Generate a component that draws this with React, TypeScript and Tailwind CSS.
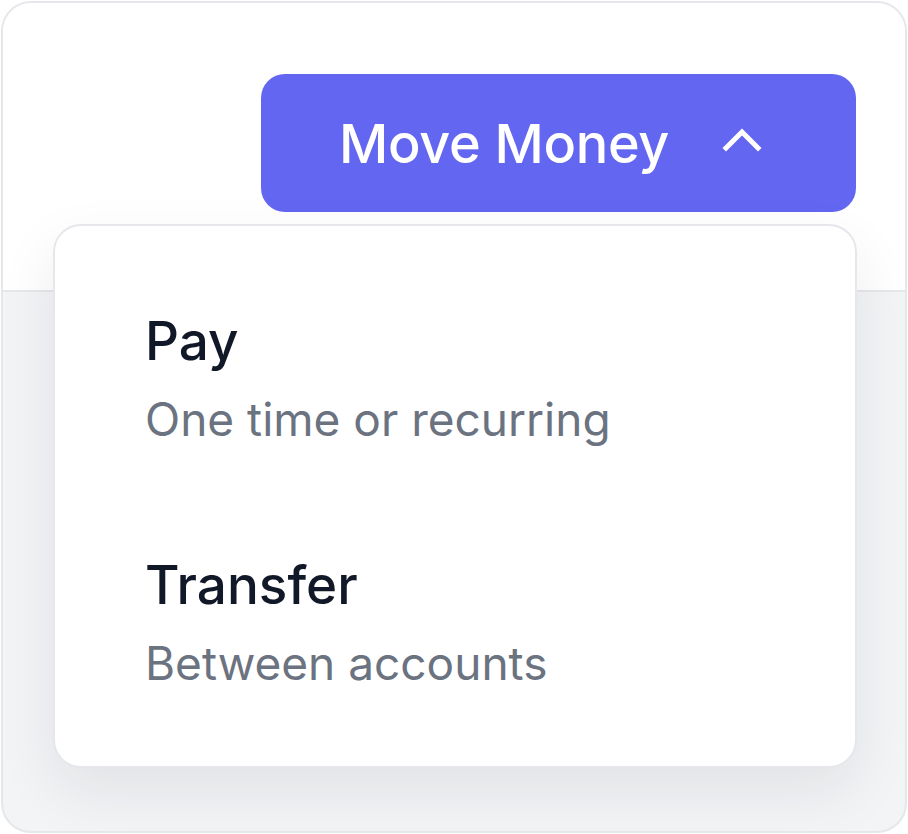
const font = { fontFamily: "Inter, 'Noto Sans', sans-serif" };

function ChevronUp() {
  return (
    <svg width="44" height="28" viewBox="0 0 44 28" fill="none" className="text-white">
      <polyline
        points="6,22 22,6 38,22"
        stroke="currentColor"
        strokeWidth="5"
        strokeLinecap="square"
        strokeLinejoin="miter"
      />
    </svg>
  );
}

const items = [
  { title: "Pay", subtitle: "One time or recurring" },
  { title: "Transfer", subtitle: "Between accounts" },
];

export default function App() {
  return (
    <div className="w-[908px] h-[834px] p-[1px] bg-white" style={font}>
      <div className="w-[906px] h-[832px] rounded-[30px] border-2 border-[#e5e7eb] overflow-hidden flex flex-col bg-[#f3f4f6]">
        <div className="h-[289px] bg-white border-b-2 border-[#e5e7eb] flex justify-end pt-[71px] pr-[49px]">
          <div className="relative">
            <button className="w-[595px] h-[138px] rounded-[24px] bg-[#6366f1] flex items-center pl-[78px] text-white text-[54px] font-medium tracking-[-0.3px]">
              <span>Move Money</span>
              <span className="ml-[51px] mt-[-6px] flex">
                <ChevronUp />
              </span>
            </button>
            <div className="absolute z-10 top-[150px] right-[-1px] w-[804px] rounded-[28px] border-2 border-[#e5e7eb] bg-white shadow-[0_24px_60px_rgba(17,24,39,0.08)] pt-[33px] pb-[19px]">
              {items.map((item) => (
                <div key={item.title} className="py-[42px] pl-[90px]">
                  <div className="text-[53px] leading-[80px] font-medium text-[#111827]">
                    {item.title}
                  </div>
                  <div className="text-[46px] leading-[76px] pb-[4px] text-[#6b7280]">
                    {item.subtitle}
                  </div>
                </div>
              ))}
            </div>
          </div>
        </div>
        <div className="flex-1" />
      </div>
    </div>
  );
}
